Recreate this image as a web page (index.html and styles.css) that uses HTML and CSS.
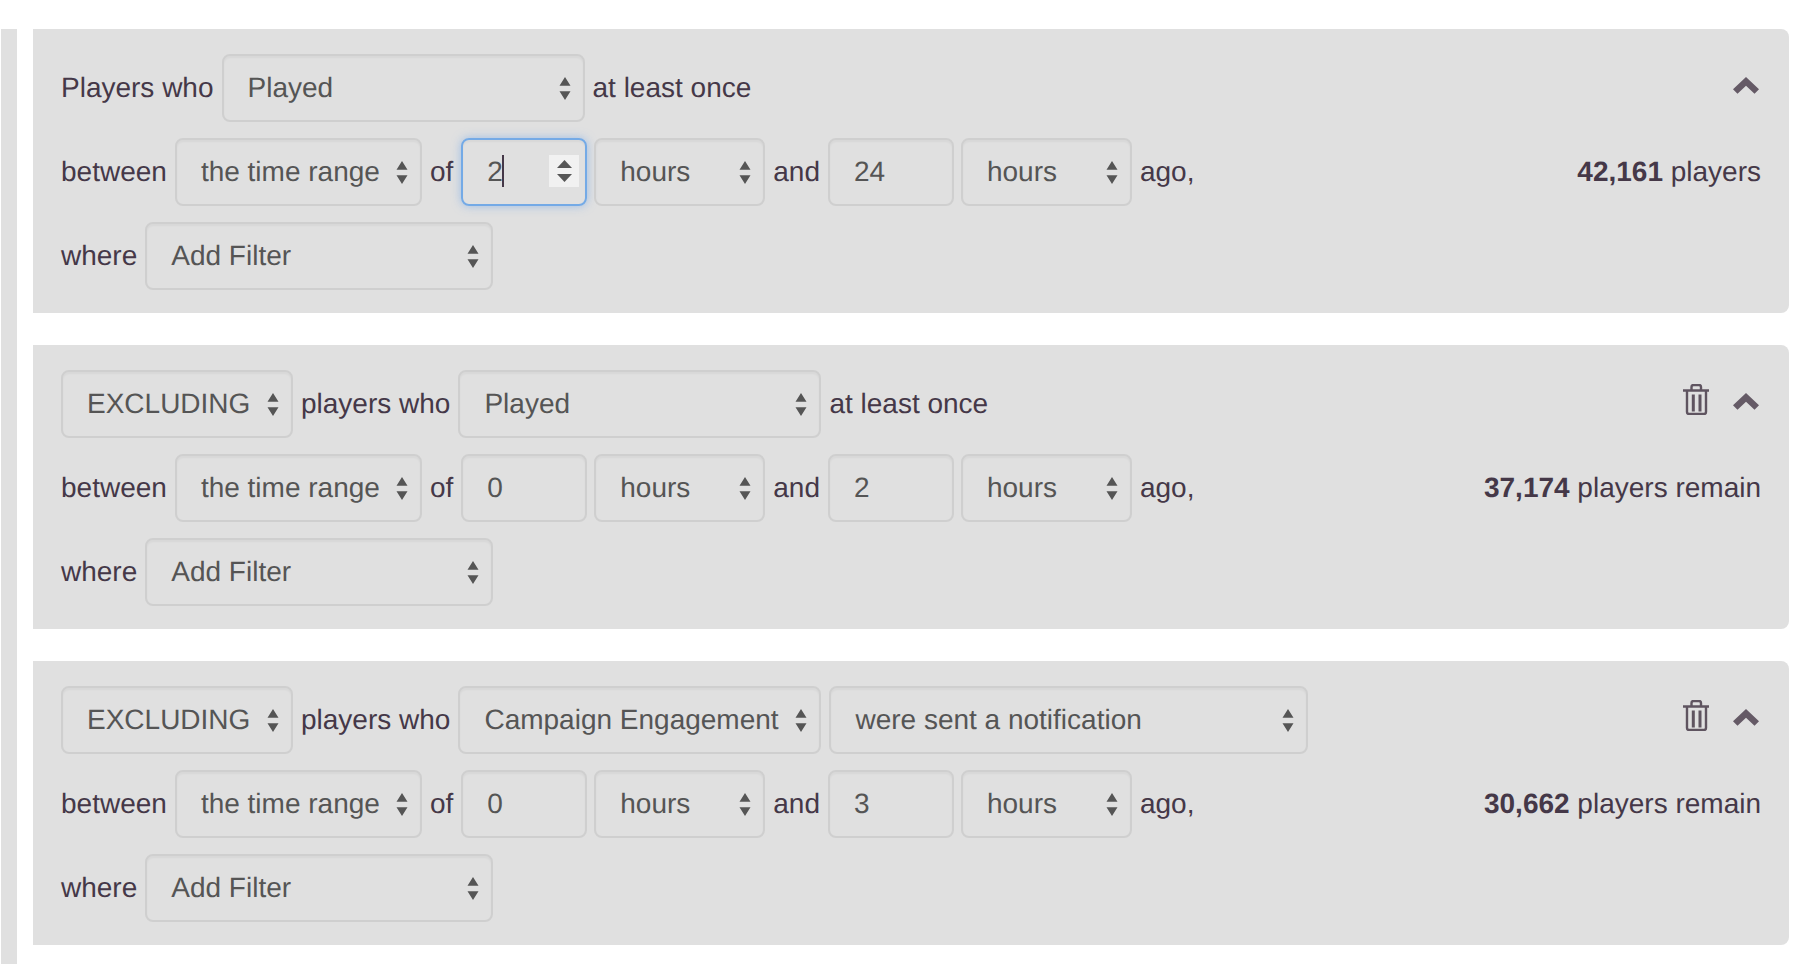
FILE: index.html
```html
<!DOCTYPE html>
<html lang="en">
<head>
<meta charset="utf-8">
<title>Segment filters</title>
<link rel="stylesheet" href="styles.css">
</head>
<body>
<svg class="defs" width="0" height="0" aria-hidden="true">
  <symbol id="arrows" viewBox="0 0 12 23" preserveAspectRatio="none"><path d="M6 0l5.500 8.700H.5zM6 23L.5 14.300h11z"/></symbol>
  <symbol id="spin" viewBox="0 0 15 22" preserveAspectRatio="none"><path d="M7.500 0L15 8H0zM7.500 22L0 14h15z"/></symbol>
  <symbol id="chev" viewBox="0 0 26 17"><path d="M13 0L26 12.300 21.500 16.800 13 8.700 4.500 16.800 0 12.300z"/></symbol>
  <symbol id="trash" viewBox="0 0 26 31"><path d="M8.500 5.500V3a2 2 0 0 1 2-2h5.500a2 2 0 0 1 2 2v2.500M0 6.500h26M4 7v21a2 2 0 0 0 2 2h15a2 2 0 0 0 2-2V7" fill="none" stroke="currentColor" stroke-width="2.400"/><path d="M10.300 10.500v17M17 10.500v17" fill="none" stroke="currentColor" stroke-width="3"/></symbol>
</svg>
<main class="page">
  <div class="rail"></div>
  <div class="stack">

    <section class="card">
      <div class="row">
        <span>Players who</span>
        <div class="sel w-363"><span>Played</span><svg class="arr"><use href="#arrows"/></svg></div>
        <span>at least once</span>
        <div class="tools"><svg class="chev"><use href="#chev"/></svg></div>
      </div>
      <div class="row">
        <span>between</span>
        <div class="sel w-247"><span>the time range</span><svg class="arr"><use href="#arrows"/></svg></div>
        <span>of</span>
        <div class="num focus"><span>2</span><i class="caret"></i><b class="spin"><svg class="spin-arr"><use href="#spin"/></svg></b></div>
        <div class="sel w-171"><span>hours</span><svg class="arr"><use href="#arrows"/></svg></div>
        <span>and</span>
        <div class="num"><span>24</span></div>
        <div class="sel w-171"><span>hours</span><svg class="arr"><use href="#arrows"/></svg></div>
        <span>ago,</span>
        <div class="count"><strong>42,161</strong> players</div>
      </div>
      <div class="row">
        <span>where</span>
        <div class="sel w-348"><span>Add Filter</span><svg class="arr"><use href="#arrows"/></svg></div>
      </div>
    </section>

    <section class="card">
      <div class="row">
        <div class="sel w-232"><span>EXCLUDING</span><svg class="arr"><use href="#arrows"/></svg></div>
        <span>players who</span>
        <div class="sel w-363"><span>Played</span><svg class="arr"><use href="#arrows"/></svg></div>
        <span>at least once</span>
        <div class="tools"><svg class="trash"><use href="#trash"/></svg><svg class="chev"><use href="#chev"/></svg></div>
      </div>
      <div class="row">
        <span>between</span>
        <div class="sel w-247"><span>the time range</span><svg class="arr"><use href="#arrows"/></svg></div>
        <span>of</span>
        <div class="num"><span>0</span></div>
        <div class="sel w-171"><span>hours</span><svg class="arr"><use href="#arrows"/></svg></div>
        <span>and</span>
        <div class="num"><span>2</span></div>
        <div class="sel w-171"><span>hours</span><svg class="arr"><use href="#arrows"/></svg></div>
        <span>ago,</span>
        <div class="count"><strong>37,174</strong> players remain</div>
      </div>
      <div class="row">
        <span>where</span>
        <div class="sel w-348"><span>Add Filter</span><svg class="arr"><use href="#arrows"/></svg></div>
      </div>
    </section>

    <section class="card">
      <div class="row">
        <div class="sel w-232"><span>EXCLUDING</span><svg class="arr"><use href="#arrows"/></svg></div>
        <span>players who</span>
        <div class="sel w-363"><span>Campaign Engagement</span><svg class="arr"><use href="#arrows"/></svg></div>
        <div class="sel w-479"><span>were sent a notification</span><svg class="arr"><use href="#arrows"/></svg></div>
        <div class="tools"><svg class="trash"><use href="#trash"/></svg><svg class="chev"><use href="#chev"/></svg></div>
      </div>
      <div class="row">
        <span>between</span>
        <div class="sel w-247"><span>the time range</span><svg class="arr"><use href="#arrows"/></svg></div>
        <span>of</span>
        <div class="num"><span>0</span></div>
        <div class="sel w-171"><span>hours</span><svg class="arr"><use href="#arrows"/></svg></div>
        <span>and</span>
        <div class="num"><span>3</span></div>
        <div class="sel w-171"><span>hours</span><svg class="arr"><use href="#arrows"/></svg></div>
        <span>ago,</span>
        <div class="count"><strong>30,662</strong> players remain</div>
      </div>
      <div class="row">
        <span>where</span>
        <div class="sel w-348"><span>Add Filter</span><svg class="arr"><use href="#arrows"/></svg></div>
      </div>
    </section>

  </div>
</main>
</body>
</html>
```
FILE: styles.css
```css
* { box-sizing: border-box; }
html, body { margin: 0; height: 964px; overflow: hidden; background: #fff; }
body { font-family: "Liberation Sans", Arial, sans-serif; font-size: 28px; color: #453848; text-rendering: geometricPrecision; }
.defs { position: absolute; }
.page { display: flex; height: 964px; padding: 29px 15px 0 1px; }
.rail { width: 16px; margin-right: 16px; background: #e0e0e0; }
.stack { flex: 1; display: flex; flex-direction: column; gap: 32px; }
.card { height: 284px; padding: 25px 28px 0 28px; background: #e0e0e0; border-radius: 0 8px 8px 0; display: flex; flex-direction: column; gap: 16px; }
.row { display: flex; align-items: center; gap: 8px; height: 68px; }
.sel, .num { position: relative; display: flex; align-items: center; height: 68px; flex: none; padding-left: 24px; color: #555; border: 2px solid #cfcfcf; border-radius: 8px; box-shadow: inset 0 2px 2px rgba(0, 0, 0, .04); }
.num { width: 126px; margin-right: -1px; }
.w-171 { width: 171px; }
.w-232 { width: 232px; }
.w-247 { width: 247px; }
.w-348 { width: 348px; }
.w-363 { width: 363px; }
.w-479 { width: 479px; }
.arr { position: absolute; right: 12px; top: 21px; width: 12px; height: 23px; fill: #555; }
.focus { border-color: #74aae6; box-shadow: inset 0 2px 2px rgba(0, 0, 0, .04), 0 0 10px rgba(102, 160, 233, .55); }
.caret { position: absolute; left: 39px; top: 15px; width: 2px; height: 32px; background: #453848; }
.spin { position: absolute; right: 6px; top: 15px; width: 30px; height: 32px; background: #f1f1f1; display: flex; align-items: center; justify-content: center; }
.spin-arr { width: 15px; height: 22px; fill: #555; }
.count { margin-left: auto; }
.count strong { font-weight: 700; }
.tools { margin-left: auto; margin-right: 2px; display: flex; align-items: center; gap: 24px; color: #5f5460; }
.chev { width: 26px; height: 17px; fill: #655a66; margin-top: -5px; }
.trash { width: 26px; height: 31px; margin-top: -9px; }
```
